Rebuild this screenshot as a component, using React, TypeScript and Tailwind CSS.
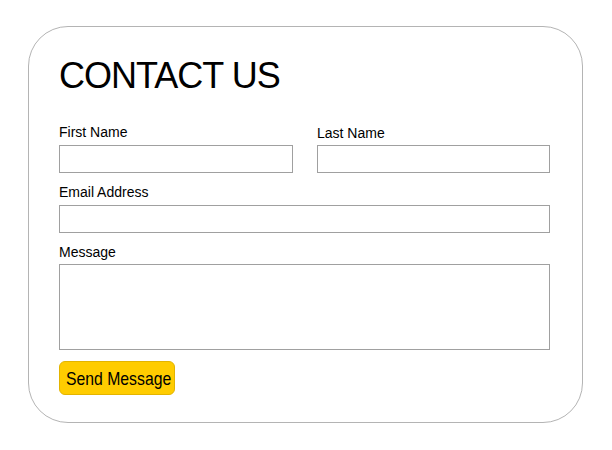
export default function App() {
  return (
    <div className="w-[612px] h-[450px] bg-white pt-[26px] pl-[28px]" style={{ fontFamily: '"Liberation Sans", Arial, sans-serif' }}>
      <div className="w-[555px] h-[397px] rounded-[40px] border border-[#b4b4b4] pt-[31px] pl-[30px] pr-[33px] text-black">
        <h1 className="text-[36px] leading-[36px] tracking-[-1px]">CONTACT US</h1>

        <div className="mt-[28px] grid grid-cols-[234px_233px] gap-x-[24px]">
          <div>
            <label className="block text-[14px] leading-5">First Name</label>
            <input className="mt-[3px] block w-full h-[28px] border border-[#a0a0a0] bg-white outline-none" />
          </div>
          <div>
            <label className="block text-[14px] leading-5 pt-px">Last Name</label>
            <input className="mt-[2px] block w-full h-[28px] border border-[#a0a0a0] bg-white outline-none" />
          </div>
        </div>

        <div className="mt-[9px]">
          <label className="block text-[14px] leading-5">Email Address</label>
          <input className="mt-[3px] block w-[491px] h-[28px] border border-[#a0a0a0] bg-white outline-none" />
        </div>

        <div className="mt-[9px]">
          <label className="block text-[14px] leading-5">Message</label>
          <textarea className="mt-[2px] block w-[491px] h-[86px] border border-[#a0a0a0] bg-white outline-none resize-none" />
        </div>

        <button className="mt-[11px] w-[116px] h-[34px] rounded-[6px] bg-[#ffcc00] border border-[#e3b400] flex items-center pl-[6px] overflow-hidden">
          <span className="inline-block text-[19px] leading-none origin-left scale-x-[0.83] whitespace-nowrap">Send Message</span>
        </button>
      </div>
    </div>
  );
}
